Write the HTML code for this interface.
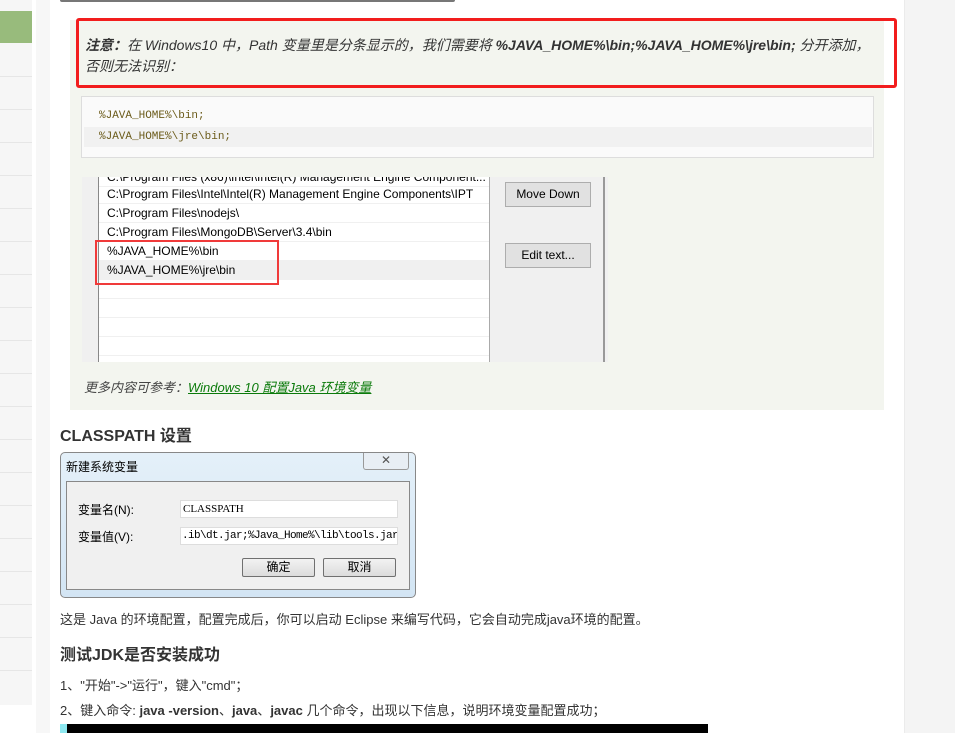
<!DOCTYPE html>
<html><head><meta charset="utf-8"><style>
*{margin:0;padding:0;box-sizing:border-box}
body{width:955px;height:733px;overflow:hidden;background:#fff;font-family:"Liberation Sans","Noto Sans CJK SC",sans-serif;position:relative;color:#333}
.a{position:absolute}
.sl{left:0;width:32px;height:1px;background:#e6e6e6}
.row{position:absolute;left:0;width:390px;height:19px;font-size:12px;line-height:19px;padding-left:8px;border-bottom:1px solid #f0f0f0;color:#000;white-space:nowrap;overflow:hidden}
</style></head><body>
<div class="a" style="left:0;top:0;width:32px;height:705px;background:#f6f6f6"></div>
<div class="a" style="left:0;top:11px;width:32px;height:32px;background:#98bb7c"></div>
<div class="a sl" style="top:76px"></div><div class="a sl" style="top:109px"></div><div class="a sl" style="top:142px"></div><div class="a sl" style="top:175px"></div><div class="a sl" style="top:208px"></div><div class="a sl" style="top:241px"></div><div class="a sl" style="top:274px"></div><div class="a sl" style="top:307px"></div><div class="a sl" style="top:340px"></div><div class="a sl" style="top:373px"></div><div class="a sl" style="top:406px"></div><div class="a sl" style="top:439px"></div><div class="a sl" style="top:472px"></div><div class="a sl" style="top:505px"></div><div class="a sl" style="top:538px"></div><div class="a sl" style="top:571px"></div><div class="a sl" style="top:604px"></div><div class="a sl" style="top:637px"></div><div class="a sl" style="top:670px"></div>
<div class="a" style="left:36px;top:0;width:14px;height:733px;background:#f7f7f7"></div>
<div class="a" style="left:904px;top:0;width:51px;height:733px;background:#f4f4f4;border-left:1px solid #ebebeb"></div>
<div class="a" style="left:60px;top:0;width:395px;height:2px;background:#777;border-radius:0 0 2px 2px"></div>
<div class="a" style="left:70px;top:20px;width:814px;height:390px;background:#f3f5ef"></div>
<div class="a" style="left:76px;top:18px;width:821px;height:70px;border:3px solid #f21d1d;border-radius:3px"></div>
<div class="a" style="left:85px;top:35px;white-space:nowrap;font-size:14px;line-height:21px;font-style:italic;color:#333">
<b>注意：</b>在 Windows10 中，Path 变量里是分条显示的，我们需要将 <b>%JAVA_HOME%\bin;%JAVA_HOME%\jre\bin;</b> 分开添加，<br>否则无法识别：</div>
<div class="a" style="left:81px;top:96px;width:793px;height:62px;border:1px solid #ddd;background:#fafafa"></div>
<div class="a" style="left:84px;top:106px;width:788px;height:21px;background:#fafafa;font:11px/21px 'Liberation Mono',monospace;padding-left:15px;color:#6b5b1a">%JAVA_HOME%\bin;</div>
<div class="a" style="left:84px;top:127px;width:788px;height:20px;background:#f1f1f1;font:11px/20px 'Liberation Mono',monospace;padding-left:15px;color:#6b5b1a">%JAVA_HOME%\jre\bin;</div>
<div class="a" style="left:82px;top:177px;width:526px;height:185px;background:#f0f0f0;overflow:hidden">
 <div class="a" style="left:16px;top:0;width:392px;height:185px;background:#fff;border-left:1px solid #888;border-right:1px solid #aaa">
  <div class="row" style="top:-9px">C:\Program Files (x86)\Intel\Intel(R) Management Engine Component...</div>
  <div class="row" style="top:8px">C:\Program Files\Intel\Intel(R) Management Engine Components\IPT</div>
  <div class="row" style="top:27px">C:\Program Files\nodejs\</div>
  <div class="row" style="top:46px">C:\Program Files\MongoDB\Server\3.4\bin</div>
  <div class="row" style="top:65px">%JAVA_HOME%\bin</div>
  <div class="row" style="top:84px;background:#f0f0f0">%JAVA_HOME%\jre\bin</div>
  <div class="row" style="top:103px"></div><div class="row" style="top:122px"></div><div class="row" style="top:141px"></div><div class="row" style="top:160px"></div>
 </div>
 <div class="a" style="left:423px;top:5px;width:86px;height:25px;border:1px solid #adadad;background:#e1e1e1;font-size:12px;line-height:23px;text-align:center;color:#000">Move Down</div>
 <div class="a" style="left:423px;top:66px;width:86px;height:25px;border:1px solid #adadad;background:#e1e1e1;font-size:12px;line-height:23px;text-align:center;color:#000">Edit text...</div>
 <div class="a" style="left:521px;top:0;width:2px;height:185px;background:#999"></div>
</div>
<div class="a" style="left:95px;top:240px;width:184px;height:45px;border:2px solid #f03a3a"></div>
<div class="a" style="left:84px;top:377px;font-size:13px;font-style:italic;color:#444">更多内容可参考：<span style="color:#0a7a0a;text-decoration:underline">Windows 10 配置Java 环境变量</span></div>
<div class="a" style="left:60px;top:422px;font-size:16px;font-weight:bold;color:#333">CLASSPATH 设置</div>
<div class="a" style="left:60px;top:452px;width:356px;height:146px;background:linear-gradient(#e4f0f9,#d3e5f4);border:1px solid #888;border-radius:5px"></div>
<div class="a" style="left:66px;top:458px;font-size:12px;color:#000">新建系统变量</div>
<div class="a" style="left:363px;top:453px;width:46px;height:17px;border:1px solid #999;border-top:none;border-radius:0 0 3px 3px;background:#e8eef4;font-size:12px;text-align:center;line-height:15px;color:#555">✕</div>
<div class="a" style="left:66px;top:481px;width:344px;height:109px;background:#f0f0f0;border:1px solid #888"></div>
<div class="a" style="left:78px;top:501px;font-size:12px;color:#000">变量名(N):</div>
<div class="a" style="left:78px;top:528px;font-size:12px;color:#000">变量值(V):</div>
<div class="a" style="left:180px;top:500px;width:218px;height:18px;background:#fff;border:1px solid #ddd;font:11px/16px 'Liberation Serif',serif;padding-left:2px;color:#000">CLASSPATH</div>
<div class="a" style="left:180px;top:527px;width:218px;height:18px;background:#fff;border:1px solid #ddd;font:11px/16px 'Liberation Mono',monospace;padding-left:1px;color:#000;white-space:nowrap;overflow:hidden;letter-spacing:-0.6px">.ib\dt.jar;%Java_Home%\lib\tools.jar</div>
<div class="a" style="left:242px;top:558px;width:73px;height:19px;border:1px solid #707070;border-radius:2px;background:linear-gradient(#f2f2f2,#dcdcdc);font-size:12px;line-height:17px;text-align:center;color:#000">确定</div>
<div class="a" style="left:323px;top:558px;width:73px;height:19px;border:1px solid #707070;border-radius:2px;background:linear-gradient(#f2f2f2,#dcdcdc);font-size:12px;line-height:17px;text-align:center;color:#000">取消</div>
<div class="a" style="left:60px;top:609px;font-size:13px;color:#333">这是 Java 的环境配置，配置完成后，你可以启动 Eclipse 来编写代码，它会自动完成java环境的配置。</div>
<div class="a" style="left:60px;top:641px;font-size:16px;font-weight:bold;color:#333">测试JDK是否安装成功</div>
<div class="a" style="left:60px;top:675px;font-size:13px;color:#333">1、"开始"-&gt;"运行"，键入"cmd"；</div>
<div class="a" style="left:60px;top:700px;font-size:13px;color:#333">2、键入命令: <b>java -version</b>、<b>java</b>、<b>javac</b> 几个命令，出现以下信息，说明环境变量配置成功；</div>
<div class="a" style="left:60px;top:724px;width:7px;height:9px;background:#8ee8f0"></div>
<div class="a" style="left:67px;top:724px;width:641px;height:9px;background:#000"></div>
</body></html>
